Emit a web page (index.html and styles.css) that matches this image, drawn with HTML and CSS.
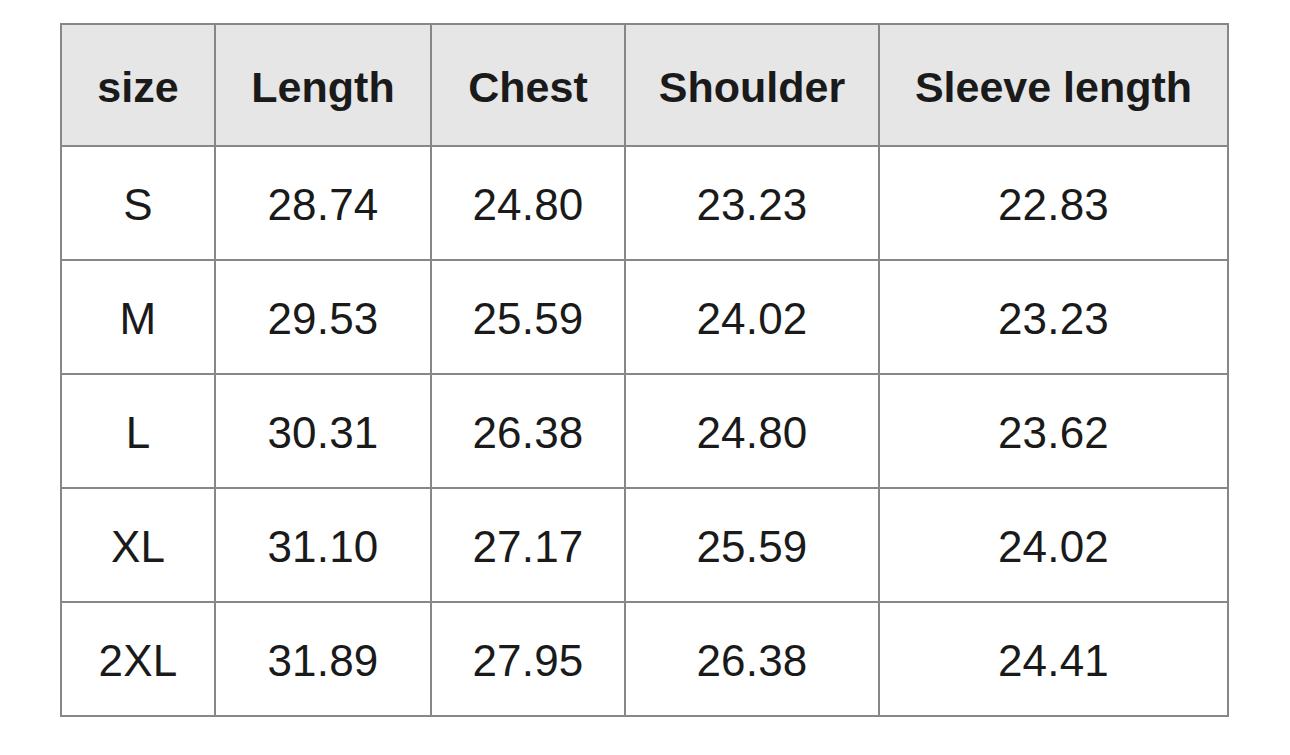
FILE: index.html
```html
<!DOCTYPE html>
<html>
<head>
<meta charset="utf-8">
<link rel="stylesheet" href="styles.css">
</head>
<body>
<div class="chart" role="table">
  <div class="cell head" role="columnheader">size</div>
  <div class="cell head" role="columnheader">Length</div>
  <div class="cell head" role="columnheader">Chest</div>
  <div class="cell head" role="columnheader">Shoulder</div>
  <div class="cell head" role="columnheader">Sleeve length</div>

  <div class="cell">S</div><div class="cell">28.74</div><div class="cell">24.80</div><div class="cell">23.23</div><div class="cell">22.83</div>
  <div class="cell">M</div><div class="cell">29.53</div><div class="cell">25.59</div><div class="cell">24.02</div><div class="cell">23.23</div>
  <div class="cell">L</div><div class="cell">30.31</div><div class="cell">26.38</div><div class="cell">24.80</div><div class="cell">23.62</div>
  <div class="cell">XL</div><div class="cell">31.10</div><div class="cell">27.17</div><div class="cell">25.59</div><div class="cell">24.02</div>
  <div class="cell">2XL</div><div class="cell">31.89</div><div class="cell">27.95</div><div class="cell">26.38</div><div class="cell">24.41</div>
</div>
</body>
</html>
```
FILE: styles.css
```css
html, body {
  margin: 0;
  padding: 0;
  background: #ffffff;
}
body {
  padding: 23px 0 0 60px;
  font-family: "Liberation Sans", Arial, sans-serif;
  color: #1a1a1a;
}
.chart {
  display: grid;
  grid-template-columns: 152px 214px 192px 252px 347px;
  grid-template-rows: 120px repeat(5, 112px);
  gap: 2px;
  padding: 2px;
  background: #878787;
  width: max-content;
}
.cell {
  background: #ffffff;
  display: flex;
  align-items: center;
  justify-content: center;
  padding-top: 4px;
  font-size: 44px;
  letter-spacing: 0.2px;
}
.head {
  background: #e6e6e6;
  font-weight: bold;
  font-size: 43px;
  letter-spacing: 0px;
}
```
